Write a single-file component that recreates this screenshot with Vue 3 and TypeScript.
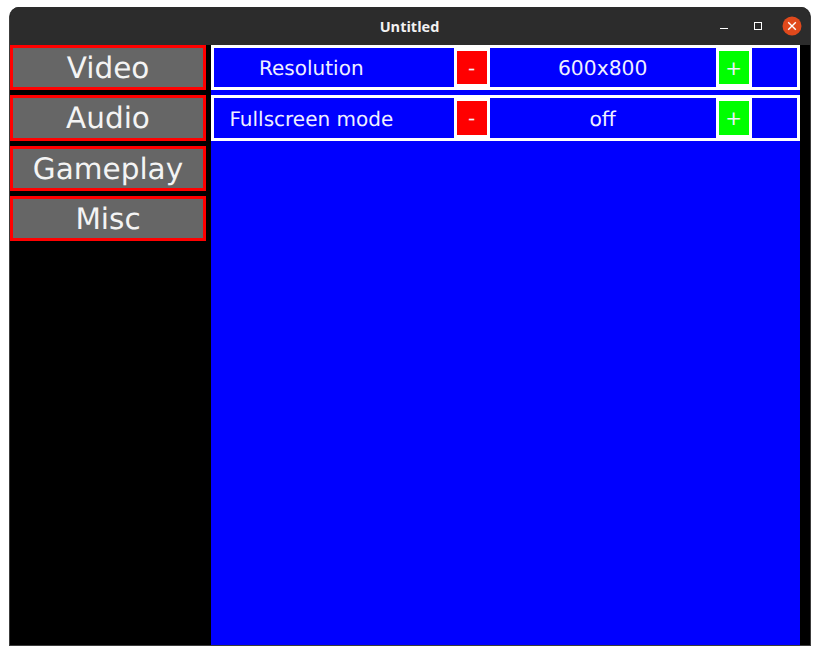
<script setup lang="ts">
const tabs: string[] = ['Video', 'Audio', 'Gameplay', 'Misc']
const rows: { label: string; value: string }[] = [
  { label: 'Resolution', value: '600x800' },
  { label: 'Fullscreen mode', value: 'off' },
]
</script>

<template>
  <div class="page">
    <div class="window">
      <header class="titlebar">
        <span class="title">Untitled</span>
        <div class="controls">
          <svg class="ctl min" width="10" height="10" viewBox="0 0 10 10"><rect x="1" y="7" width="8" height="1" fill="#fff" /></svg>
          <svg class="ctl max" width="10" height="10" viewBox="0 0 10 10"><rect x="1.5" y="1.5" width="7" height="7" fill="none" stroke="#fff" /></svg>
          <svg class="ctl close" width="20" height="20" viewBox="0 0 20 20">
            <circle cx="10" cy="10" r="9.5" fill="#e0491c" />
            <path d="M6.2 6.2l7.6 7.6M13.8 6.2l-7.6 7.6" stroke="#fff" stroke-width="1.4" fill="none" />
          </svg>
        </div>
      </header>
      <main class="content">
        <nav class="sidebar">
          <button v-for="t in tabs" :key="t" class="tab">{{ t }}</button>
        </nav>
        <section class="panel">
          <div v-for="r in rows" :key="r.label" class="row">
            <span class="label">{{ r.label }}</span>
            <span class="step"><span class="face minus">-</span></span>
            <span class="value">{{ r.value }}</span>
            <span class="step"><span class="face plus">+</span></span>
            <span class="tail"></span>
          </div>
        </section>
      </main>
    </div>
  </div>
</template>

<style>
html, body { margin: 0; background: #fff; overflow: hidden; }
</style>

<style scoped>
.page {
  width: 820px;
  height: 655px;
  padding: 7px 9px 9px 9px;
  box-sizing: border-box;
  background: #fff;
  font-family: "DejaVu Sans", sans-serif;
  color: #fff;
}
.window {
  width: 802px;
  height: 639px;
  box-sizing: border-box;
  border: 1px solid #3c3c3c;
  border-top: 0;
  border-radius: 10px 10px 0 0;
  overflow: hidden;
  display: flex;
  flex-direction: column;
  background: #000;
}
.titlebar {
  height: 38px;
  flex: none;
  background: #2c2c2c;
  position: relative;
  display: flex;
  align-items: center;
  justify-content: center;
}
.title {
  font-family: "Open Sans", sans-serif;
  font-weight: 700;
  font-size: 14.5px;
  margin-left: -1px;
  color: #f2f2f2;
}
.controls {
  position: absolute;
  top: 0;
  left: 0;
  right: 0;
  bottom: 0;
}
.ctl { position: absolute; }
.min { left: 709px; top: 14px; }
.max { left: 743px; top: 14px; }
.close { left: 772px; top: 9px; }
.content {
  flex: 1;
  display: flex;
  gap: 5px;
  padding-right: 10px;
  min-height: 0;
  text-rendering: geometricPrecision;
}
.sidebar {
  width: 196px;
  flex: none;
  display: flex;
  flex-direction: column;
  gap: 5px;
}
.tab {
  height: 45.33px;
  box-sizing: border-box;
  border: 3px solid #f00;
  background: #666;
  color: #f4f4f4;
  font-family: inherit;
  font-size: 29.5px;
  padding: 2.5px 0 0;
  line-height: 1;
  text-rendering: geometricPrecision;
}
.panel {
  flex: 1;
  background: #00f;
  display: flex;
  flex-direction: column;
  gap: 5px;
}
.row {
  height: 45.33px;
  box-sizing: border-box;
  border: 3px solid #fff;
  display: flex;
  font-size: 20px;
  align-items: stretch;
  color: #f0f0ff;
}
.label {
  width: 239.67px;
  flex: none;
  box-sizing: border-box;
  padding: 1.6px 45px 0 0;
  display: flex;
  align-items: center;
  justify-content: center;
}
.step {
  width: 36px;
  flex: none;
  box-sizing: border-box;
  background: #fff;
  padding: 3px;
  display: flex;
}
.face {
  flex: 1;
  display: flex;
  align-items: center;
  justify-content: center;
}
.minus { background: #f00; }
.plus { background: #0f0; }
.value {
  width: 226px;
  flex: none;
  padding-top: 1.6px;
  font-size: 20.3px;
  display: flex;
  align-items: center;
  justify-content: center;
}
.tail { flex: 1; }
</style>
